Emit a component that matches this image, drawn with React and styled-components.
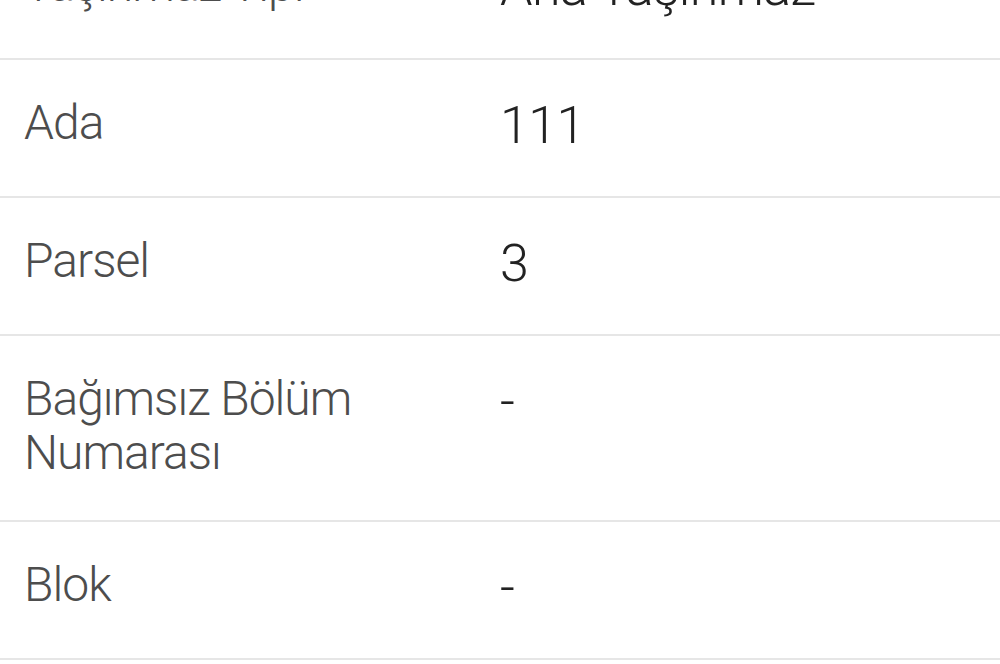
import React from "react";
import styled, { createGlobalStyle } from "styled-components";

const GlobalStyle = createGlobalStyle`
  html, body {
    margin: 0;
    padding: 0;
    background: #fff;
    overflow: hidden;
  }
  body {
    font-family: Roboto, "Noto Sans", "Liberation Sans", sans-serif;
  }
`;

const List = styled.div`
  margin-top: -78px;
  display: flex;
  flex-direction: column;
`;

const Row = styled.div`
  display: grid;
  grid-template-columns: 475px 1fr;
  align-items: start;
  padding: 36px 0 40px 0;
  border-bottom: 2px solid #e6e6e6;
`;

const Label = styled.div`
  padding-left: 24px;
  padding-right: 20px;
  font-size: 48px;
  font-weight: 300;
  line-height: 54px;
  letter-spacing: -1px;
  color: #4d4d4d;
`;

const Value = styled.div`
  padding-left: 25px;
  font-size: 52px;
  font-weight: 300;
  line-height: 60px;
  letter-spacing: -0.6px;
  color: #222;
`;

const rows = [
  { label: "Taşınmaz Tipi", value: "Ana Taşınmaz" },
  { label: "Ada", value: "111" },
  { label: "Parsel", value: "3" },
  { label: "Bağımsız Bölüm Numarası", value: "-" },
  { label: "Blok", value: "-" },
];

const App = () => {
  return (
    <>
      <GlobalStyle />
      <List>
        {rows.map((r) => (
          <Row key={r.label}>
            <Label>{r.label}</Label>
            <Value>{r.value}</Value>
          </Row>
        ))}
      </List>
    </>
  );
};

export default App;
